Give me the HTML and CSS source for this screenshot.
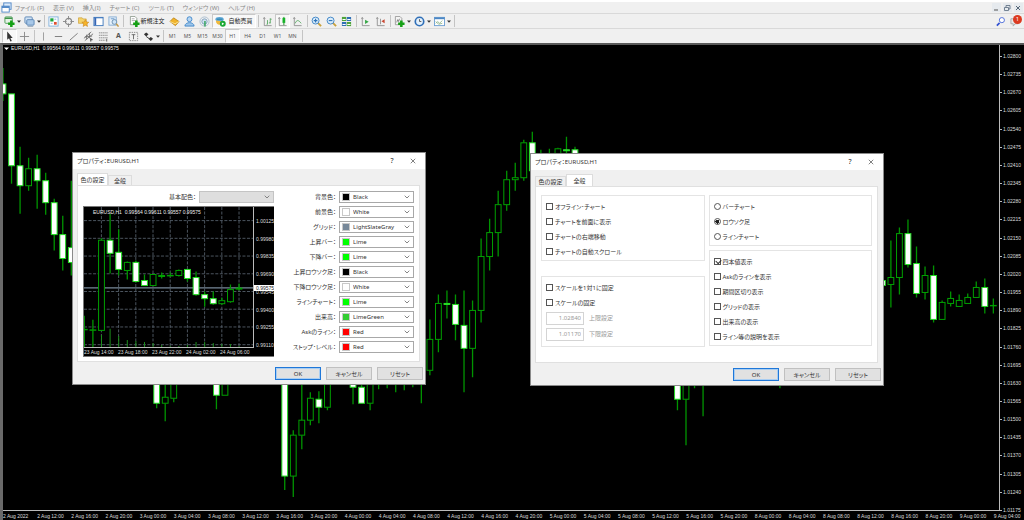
FILE: index.html
```html
<!DOCTYPE html>
<html lang="ja">
<head>
<meta charset="utf-8">
<title>EURUSD,H1</title>
<link rel="stylesheet" href="styles.css">
</head>
<body>
<svg class="defs" aria-hidden="true">
  <symbol id="caret" viewBox="0 0 4 3"><path d="M0 0.5h4L2 2.8z" fill="#333"/></symbol>
  <symbol id="chev" viewBox="0 0 6 4"><path d="M0.7 0.7L3 3L5.3 0.7" fill="none" stroke="#777" stroke-width="0.9"/></symbol>
  <symbol id="mdi" viewBox="0 0 12 12"><rect x="3" y="1" width="8" height="7" fill="#dcebfa" stroke="#4f86c6"/><rect x="1" y="4.5" width="8" height="6.5" fill="#fff" stroke="#4f86c6"/><path d="M1 5.5h8" stroke="#4f86c6" stroke-width="2"/></symbol>
  <symbol id="newchart" viewBox="0 0 12 12"><rect x="1" y="1" width="8" height="7" rx="1" fill="#e6f2e6" stroke="#4b9a55"/><path d="M1 2.5h8" stroke="#3d9448" stroke-width="1.6"/><path d="M8 5v7M4.5 8.5h7" stroke="#16a016" stroke-width="2.8"/></symbol>
  <symbol id="windows" viewBox="0 0 12 12"><rect x="1" y="1" width="8" height="7" rx="1" fill="#cfe2f5" stroke="#5b86b5"/><rect x="3" y="4" width="8" height="6" rx="1" fill="#a8c8e8" stroke="#5b86b5"/><path d="M4 11.5h6" stroke="#9ab"/></symbol>
  <symbol id="watch" viewBox="0 0 12 12"><rect x="1" y="1" width="10" height="10" fill="#fff" stroke="#7fb0dd"/><path d="M2.500 2.500h3.500v3.500H2.500z" fill="#1ea83c"/><path d="M6.500 6.500H9.500v3H6.500z" fill="#e05030"/><path d="M7 3.500h2M3 8h2" stroke="#7fb0dd"/></symbol>
  <symbol id="target" viewBox="0 0 12 12"><circle cx="6" cy="6" r="3.400" fill="none" stroke="#888" stroke-width="1.200"/><path d="M6 0v4M6 8v4M0 6h4M8 6h4" stroke="#888"/></symbol>
  <symbol id="folder" viewBox="0 0 12 12"><path d="M0.5 2h4l1 1.200H9V8H0.500z" fill="#f5d36a" stroke="#c89b30" stroke-width=".7"/><path d="M8 4l1.200 2.500 2.600.3-2 1.800.6 2.800L8 10l-2.400 1.400.6-2.800-2-1.800 2.600-.3z" fill="#f7b52a" stroke="#c5801a" stroke-width=".6"/></symbol>
  <symbol id="panel" viewBox="0 0 12 12"><rect x="1" y="1.500" width="10" height="9" fill="#fff" stroke="#3f78bd"/><path d="M2.500 2v8" stroke="#3565b5" stroke-width="2"/><path d="M1 2h10" stroke="#3f78bd"/></symbol>
  <symbol id="tester" viewBox="0 0 12 12"><rect x="1" y="1" width="8" height="9" fill="#e7f1fb" stroke="#84add4"/><circle cx="7" cy="6.500" r="2.600" fill="#cfe5f8" stroke="#6a8fb0"/><path d="M9 8.500l2.500 3" stroke="#c59a48" stroke-width="1.600"/><path d="M3 3h4" stroke="#6b9acb"/></symbol>
  <symbol id="order" viewBox="0 0 12 12"><path d="M1.500.5h5l2 2v7h-7z" fill="#fff" stroke="#7b8b7b" stroke-width=".8"/><path d="M3 3h3M3 5h4" stroke="#888" stroke-width=".7"/><path d="M8 5v7M4.500 8.500h7" stroke="#16a016" stroke-width="2.800"/></symbol>
  <symbol id="gold" viewBox="0 0 12 12"><path d="M1 6l4-4 6 4-4 4.500z" fill="#f0b42c" stroke="#b37b14" stroke-width=".8"/><path d="M1 6l5.500 2.500L11 6" fill="none" stroke="#fff0b0" stroke-width=".8"/></symbol>
  <symbol id="person" viewBox="0 0 12 12"><circle cx="6" cy="3.500" r="2.700" fill="#b9d8f4" stroke="#3f87c9"/><path d="M1 11c0-5 10-5 10 0z" fill="#9cc5ea" stroke="#3f87c9"/></symbol>
  <symbol id="signal" viewBox="0 0 12 12"><circle cx="6" cy="6" r="5" fill="none" stroke="#a9bdd0"/><circle cx="6" cy="6" r="2.900" fill="#cfe0ef" stroke="#7fa0bd"/><path d="M6.500 5.500v6" stroke="#2aa052" stroke-width="1.500"/></symbol>
  <symbol id="auto" viewBox="0 0 12 12"><ellipse cx="5" cy="3.500" rx="4.500" ry="2.500" fill="#5ca7d8"/><path d="M1 5c0 6 7 6 8 1z" fill="#f1b83c"/><path d="M2 3.500h6" stroke="#2d7f9f"/><circle cx="8.500" cy="8.500" r="3.200" fill="#18a832"/><path d="M7.500 7l2.500 1.500-2.500 1.500z" fill="#fff"/></symbol>
  <symbol id="bars" viewBox="0 0 12 12"><path d="M2.500 2v8.500h8M1.500 3l1-1.500 1 1.500" fill="none" stroke="#888" stroke-width=".9"/><path d="M6 4.500v4.500h-1M9 2.500v5.500M9 3.500h1.500M9 7.500h-1.500" fill="none" stroke="#5aa864"/></symbol>
  <symbol id="candles" viewBox="0 0 12 12"><path d="M2.500 2v8.500h8M1.500 3l1-1.500 1 1.500" fill="none" stroke="#888" stroke-width=".9"/><path d="M7.500 1v9" stroke="#178a22"/><path d="M6 2h3v5.500h-3z" fill="#18b32a"/></symbol>
  <symbol id="linechart" viewBox="0 0 12 12"><path d="M2.500 2v8.500h8M1.500 3l1-1.500 1 1.500" fill="none" stroke="#888" stroke-width=".9"/><path d="M3.500 8c1.500-4 3.500-4 6.500 0" fill="none" stroke="#5aa864"/></symbol>
  <symbol id="zoomin" viewBox="0 0 12 12"><path d="M7.500 7.500l3.500 3.500" stroke="#c9a13b" stroke-width="2"/><circle cx="5" cy="5" r="3.800" fill="#d9ecfb" stroke="#3c82c4"/><path d="M3 5h4M5 3v4" stroke="#2d74b8" stroke-width="1.200"/></symbol>
  <symbol id="zoomout" viewBox="0 0 12 12"><path d="M7.500 7.500l3.500 3.500" stroke="#c9a13b" stroke-width="2"/><circle cx="5" cy="5" r="3.800" fill="#d9ecfb" stroke="#3c82c4"/><path d="M3 5h4" stroke="#2d74b8" stroke-width="1.200"/></symbol>
  <symbol id="tiles" viewBox="0 0 12 12"><path d="M1 1h4.700v4.500H1z" fill="#4da33a"/><path d="M6.300 1H11v4.500H6.300zM1 6.500h4.700V11H1z" fill="#2f6fb5"/><path d="M6.300 6.500H11V11H6.300z" fill="#4da33a"/><path d="M1.600 3.800h3.500M6.900 3.800h3.500M1.600 9.200h3.500M6.900 9.200h3.500" stroke="#fff" stroke-width="1.200"/></symbol>
  <symbol id="scroll" viewBox="0 0 12 12"><path d="M2.500 2v8.500h8M1.500 3l1-1.500 1 1.500" fill="none" stroke="#888" stroke-width=".9"/><path d="M5.500 4l4 2.300-4 2.300z" fill="#35a645"/></symbol>
  <symbol id="shift" viewBox="0 0 12 12"><path d="M2.500 2v8.500h8M1.500 3l1-1.500 1 1.500M6 3v6" fill="none" stroke="#888" stroke-width=".9"/><path d="M10.500 3.500L7 5.800l3.500 2.200z" fill="#c8452f"/></symbol>
  <symbol id="indic" viewBox="0 0 12 12"><path d="M1.500.5h5l2 2v7h-7z" fill="#f4f4f4" stroke="#888" stroke-width=".8"/><path d="M3 7l1-3 1 2 1-3" fill="none" stroke="#555" stroke-width=".7"/><path d="M8 5v7M4.500 8.500h7" stroke="#16a016" stroke-width="2.800"/></symbol>
  <symbol id="clock" viewBox="0 0 12 12"><circle cx="6" cy="6" r="4.600" fill="#e3f0fb" stroke="#2f6fb8" stroke-width="1.800"/><path d="M6 3.500V6h2" fill="none" stroke="#555"/></symbol>
  <symbol id="template" viewBox="0 0 12 12"><rect x="0.500" y="1.500" width="11" height="9" fill="#fff" stroke="#6b9fd2"/><path d="M.5 2.500h11" stroke="#4b86c4" stroke-width="2"/><path d="M2 8l2-2 2 2 3-3M2 6l3 3 4-1" fill="none" stroke="#7ba877" stroke-width=".8"/></symbol>
  <symbol id="find" viewBox="0 0 12 12"><path d="M5 7.500L2 10.500" stroke="#2f4fd0" stroke-width="1.800"/><circle cx="7.500" cy="4.500" r="2.800" fill="#fff" stroke="#4a6bd8"/></symbol>
  <symbol id="chat" viewBox="0 0 12 12"><path d="M1 3h8v5.500H5.500l-2 2.500V8.500H1z" fill="#e8e8e8" stroke="#aaa"/></symbol>
  <symbol id="arrow" viewBox="0 0 12 12"><path d="M3.500.5v9L5.500 8l1.500 3.500 1.500-.7L7 7.500h2.500z" fill="#333"/></symbol>
  <symbol id="cross" viewBox="0 0 12 12"><path d="M6 1v10M1 6h10" stroke="#888"/></symbol>
  <symbol id="vline" viewBox="0 0 12 12"><path d="M6 1.500v9" stroke="#999"/></symbol>
  <symbol id="hline" viewBox="0 0 12 12"><path d="M2 6h8" stroke="#777"/></symbol>
  <symbol id="trend" viewBox="0 0 12 12"><path d="M2 10L10.500 2.500" stroke="#777"/></symbol>
  <symbol id="channel" viewBox="0 0 12 12"><path d="M1 8L9 1M2 10.500L11 3M4 4v5M7 2v6M2 6.500l8-1" stroke="#666" stroke-width=".9"/><path d="M8.500 7.500v4M10.500 9.500h-2" stroke="#333"/></symbol>
  <symbol id="fib" viewBox="0 0 12 12"><path d="M1 2h10M1 4.700h10M1 7.400h10M1 10.100h7" stroke="#888" stroke-dasharray="1.500 .5"/><path d="M9.500 8.500v3" stroke="#555"/></symbol>
  <symbol id="textbox" viewBox="0 0 12 12"><rect x="1.500" y="1.500" width="9" height="9" fill="none" stroke="#888" stroke-dasharray="1.500 1"/><path d="M4 4h4M6 4v5" stroke="#666"/></symbol>
  <symbol id="shapes" viewBox="0 0 12 12"><path d="M1 3.500l2.500-2L6 3.500 3.500 6z" fill="#333"/><path d="M3.500 6l3.500 2.500" stroke="#333"/><path d="M6 8.500l2.500-2L11 8.500 8.500 11z" fill="#333"/></symbol>
</svg>

<header class="top">
  <nav class="menu">
    <svg class="icon"><use href="#mdi"/></svg>
    <button>ファイル (F)</button><button>表示 (V)</button><button>挿入(I)</button><button>チャート (C)</button><button>ツール (T)</button><button>ウィンドウ (W)</button><button>ヘルプ (H)</button>
    <div class="winbtns">
      <button aria-label="最小化"><svg viewBox="0 0 8 8"><path d="M2 6h4" stroke="#555"/></svg></button>
      <button aria-label="元に戻す"><svg viewBox="0 0 8 8"><path d="M3 3V1.500h4V5H5.500M1.500 3.500h4v3h-4z" fill="none" stroke="#678" stroke-width=".9"/></svg></button>
      <button aria-label="閉じる"><svg viewBox="0 0 8 8"><path d="M2 2l4 4M6 2L2 6" stroke="#567"/></svg></button>
    </div>
  </nav>
  <div class="bar">
    <button class="tool drop" aria-label="新規チャート"><svg class="icon"><use href="#newchart"/></svg><svg class="caret"><use href="#caret"/></svg></button>
    <button class="tool drop" aria-label="チャート組表示"><svg class="icon"><use href="#windows"/></svg><svg class="caret"><use href="#caret"/></svg></button>
    <i class="sep"></i>
    <button class="tool" aria-label="気配値"><svg class="icon"><use href="#watch"/></svg></button>
    <button class="tool" aria-label="データウィンドウ"><svg class="icon"><use href="#target"/></svg></button>
    <button class="tool" aria-label="ナビゲーター"><svg class="icon"><use href="#folder"/></svg></button>
    <button class="tool" aria-label="ターミナル"><svg class="icon"><use href="#panel"/></svg></button>
    <button class="tool" aria-label="テスター"><svg class="icon"><use href="#tester"/></svg></button>
    <i class="sep wide"></i>
    <button class="tool order"><svg class="icon"><use href="#order"/></svg>新規注文</button>
    <button class="tool" aria-label="エディター"><svg class="icon"><use href="#gold"/></svg></button>
    <button class="tool" aria-label="コミュニティ"><svg class="icon"><use href="#person"/></svg></button>
    <button class="tool" aria-label="シグナル"><svg class="icon"><use href="#signal"/></svg></button>
    <button class="tool auto on"><svg class="icon"><use href="#auto"/></svg>自動売買</button>
    <i class="sep"></i>
    <button class="tool" aria-label="バー"><svg class="icon"><use href="#bars"/></svg></button>
    <button class="tool on" aria-label="ローソク"><svg class="icon"><use href="#candles"/></svg></button>
    <button class="tool" aria-label="ライン"><svg class="icon"><use href="#linechart"/></svg></button>
    <i class="sep"></i>
    <button class="tool" aria-label="拡大"><svg class="icon"><use href="#zoomin"/></svg></button>
    <button class="tool" aria-label="縮小"><svg class="icon"><use href="#zoomout"/></svg></button>
    <button class="tool" aria-label="整列"><svg class="icon"><use href="#tiles"/></svg></button>
    <i class="sep"></i>
    <button class="tool" aria-label="自動スクロール"><svg class="icon"><use href="#scroll"/></svg></button>
    <button class="tool" aria-label="右端移動"><svg class="icon"><use href="#shift"/></svg></button>
    <i class="sep"></i>
    <button class="tool drop" aria-label="インディケータ"><svg class="icon"><use href="#indic"/></svg><svg class="caret"><use href="#caret"/></svg></button>
    <button class="tool drop" aria-label="時間足"><svg class="icon"><use href="#clock"/></svg><svg class="caret"><use href="#caret"/></svg></button>
    <button class="tool drop" aria-label="定型チャート"><svg class="icon"><use href="#template"/></svg><svg class="caret"><use href="#caret"/></svg></button>
    <i class="sep"></i>
    <div class="right">
      <button class="tool" aria-label="検索"><svg class="icon"><use href="#find"/></svg></button>
      <button class="tool chat" aria-label="通知"><svg class="icon"><use href="#chat"/></svg><span class="badge">1</span></button>
    </div>
  </div>
  <div class="bar">
    <button class="tool on" aria-label="カーソル"><svg class="icon"><use href="#arrow"/></svg></button>
    <button class="tool" aria-label="クロスヘア"><svg class="icon"><use href="#cross"/></svg></button>
    <i class="sep"></i>
    <button class="tool" aria-label="垂直線"><svg class="icon"><use href="#vline"/></svg></button>
    <button class="tool" aria-label="水平線"><svg class="icon"><use href="#hline"/></svg></button>
    <button class="tool" aria-label="トレンドライン"><svg class="icon"><use href="#trend"/></svg></button>
    <button class="tool" aria-label="チャネル"><svg class="icon"><use href="#channel"/></svg></button>
    <button class="tool" aria-label="フィボナッチ"><svg class="icon"><use href="#fib"/></svg></button>
    <button class="tool letter">A</button>
    <button class="tool" aria-label="ラベル"><svg class="icon"><use href="#textbox"/></svg></button>
    <button class="tool drop" aria-label="矢印"><svg class="icon"><use href="#shapes"/></svg><svg class="caret"><use href="#caret"/></svg></button>
    <i class="sep"></i>
    <button class="tool tf">M1</button><button class="tool tf">M5</button><button class="tool tf">M15</button><button class="tool tf">M30</button><button class="tool tf on">H1</button><button class="tool tf">H4</button><button class="tool tf">D1</button><button class="tool tf">W1</button><button class="tool tf">MN</button>
    <i class="sep"></i>
  </div>
</header>

<main class="chart">
  <div class="plot">
    <svg id="main-plot" class="fill" viewBox="3 44 997 466" preserveAspectRatio="none"></svg>
    <div class="ticker"><svg class="caret"><path d="M0 .5h5L2.500 3z" fill="#fff"/></svg><span>EURUSD,H1&nbsp; 0.99564 0.99611 0.99557 0.99575</span></div>
  </div>
  <div class="prices" id="prices"></div>
  <div class="times" id="times"></div>

  <section class="dialog colors" role="dialog" aria-label="プロパティ">
    <div class="title"><span>プロパティ：EURUSD,H1</span><button>?</button><button aria-label="閉じる"><svg viewBox="0 0 8 8"><path d="M1 1l6 6M7 1L1 7" stroke="#444" stroke-width=".9"/></svg></button></div>
    <div class="tabs"><button class="tab active">色の設定</button><button class="tab">全般</button></div>
    <div class="page two">
      <div class="preview">
        <div class="field"><label for="scheme">基本配色：</label><div class="combo off"><select id="scheme" disabled><option></option></select><svg class="chev"><use href="#chev"/></svg></div></div>
        <div class="mini">
          <div class="plot">
            <svg id="mini-plot" class="fill" viewBox="85 208 168 139" preserveAspectRatio="none"></svg>
            <div class="ticker"><span>EURUSD,H1&nbsp; 0.99564 0.99611 0.99557 0.99575</span></div>
          </div>
          <div class="mprices"><span>1.00125</span><span>0.99980</span><span>0.99835</span><span>0.99690</span><span>0.99545</span><span>0.99400</span><span>0.99255</span><span>0.99110</span><b class="now">0.99575</b></div>
          <div class="mtimes"><span>23 Aug 14:00</span><span>23 Aug 18:00</span><span>23 Aug 22:00</span><span>24 Aug 02:00</span><span>24 Aug 06:00</span></div>
        </div>
      </div>
      <div class="fields" id="fields"></div>
    </div>
    <div class="actions"><button class="btn default">OK</button><button class="btn">キャンセル</button><button class="btn">リセット</button></div>
  </section>

  <section class="dialog general" role="dialog" aria-label="プロパティ">
    <div class="title"><span>プロパティ：EURUSD,H1</span><button>?</button><button aria-label="閉じる"><svg viewBox="0 0 8 8"><path d="M1 1l6 6M7 1L1 7" stroke="#444" stroke-width=".9"/></svg></button></div>
    <div class="tabs"><button class="tab">色の設定</button><button class="tab active">全般</button></div>
    <div class="page groups">
      <div class="col apart">
        <div class="group">
          <label><input type="checkbox">オフライン･チャート</label>
          <label><input type="checkbox">チャートを前面に表示</label>
          <label><input type="checkbox">チャートの右端移動</label>
          <label><input type="checkbox">チャートの自動スクロール</label>
        </div>
        <div class="group scale">
          <label><input type="checkbox">スケールを1対1に固定</label>
          <label><input type="checkbox">スケールの固定</label>
          <label class="num"><input type="text" value="1.02840" disabled>上限設定</label>
          <label class="num"><input type="text" value="1.01170" disabled>下限設定</label>
        </div>
      </div>
      <div class="col">
        <div class="group">
          <label><input type="radio" name="kind">バーチャート</label>
          <label><input type="radio" name="kind" checked>ロウソク足</label>
          <label><input type="radio" name="kind">ラインチャート</label>
        </div>
        <div class="group">
          <label><input type="checkbox" checked>四本値表示</label>
          <label><input type="checkbox">Askのラインを表示</label>
          <label><input type="checkbox">期間区切り表示</label>
          <label><input type="checkbox">グリッドの表示</label>
          <label><input type="checkbox">出来高の表示</label>
          <label><input type="checkbox">ライン等の説明を表示</label>
        </div>
      </div>
    </div>
    <div class="actions"><button class="btn default">OK</button><button class="btn">キャンセル</button><button class="btn">リセット</button></div>
  </section>
</main>
<script src="chart.js"></script>
</body>
</html>
```
FILE: styles.css
```css
* { box-sizing: border-box; }
body {
  margin: 0;
  min-height: 100vh;
  display: flex;
  flex-direction: column;
  background: #f0f0f0;
  color: #333;
  font: 6px/8px "Noto Sans", "Noto Sans CJK JP", sans-serif;
}
button, input, select { font: inherit; color: inherit; margin: 0; padding: 0; border: 0; background: none; border-radius: 0; }
svg { display: block; }
.defs { position: absolute; width: 0; height: 0; }
.icon { width: 11px; height: 11px; flex: none; }
.caret { width: 5px; height: 3px; flex: none; }
.tool .caret { width: 4px; }
.fill { width: 100%; height: 100%; }

/* Menu and toolbars */
.top { border-top: 2px solid #fff; height: 43px; }
.menu { display: flex; align-items: center; gap: 9px; height: 11px; padding-left: 1px; color: #888; font-feature-settings: "palt"; }
.menu .icon { margin-right: -6px; }
.winbtns { display: flex; margin-left: auto; gap: 2px; padding-right: 1px; }
.winbtns button { width: 9px; height: 9px; background: #e6eaee; }
.winbtns svg { width: 8px; height: 8px; }
.bar { display: flex; align-items: center; height: 15px; padding-left: 2px; border-top: 1px solid #d9d9d9; }
.tool { display: flex; align-items: center; justify-content: center; width: 15px; height: 14px; color: #222; border: 1px solid transparent; }
.tool.on { background: #f8f8f8; border-color: #c8c8c8 #fff #fff #c8c8c8; }
.tool.drop { width: 20px; gap: 2px; }
.tool.order { width: 40px; white-space: nowrap; }
.tool.auto { width: 44px; gap: 2px; white-space: nowrap; }
.tool.letter { color: #555; font-size: 7px; font-weight: 700; }
.tool.tf { font-size: 5px; color: #555; }
.sep { width: 4px; height: 12px; flex: none; background: linear-gradient(90deg, transparent 2px, #c4c4c4 2px, #c4c4c4 3px, transparent 3px); }
.sep.wide { width: 6px; }
.right { margin-left: auto; display: flex; padding-right: 1px; }
.chat { position: relative; }
.badge { position: absolute; top: 0; right: 0; width: 9px; height: 9px; border-radius: 50%; background: #dc3a20; color: #fff; line-height: 9px; text-align: center; }

/* Chart window */
.chart {
  flex: 1;
  position: relative;
  display: grid;
  grid-template: minmax(0, 1fr) 9px / minmax(0, 1fr) 24px;
  border-top: 2px solid #5a5a5a;
  border-left: 3px solid #6a6a6a;
  background: #000;
  color: #ddd;
  overflow: hidden;
  font: 5px/6px "Liberation Sans", Arial, sans-serif;
}
.plot { position: relative; min-width: 0; min-height: 0; border-right: 1px solid #bbb; border-bottom: 1px solid #bbb; }
.plot .fill { position: absolute; inset: 0; }
.ticker { position: absolute; left: 1px; top: 0; display: flex; align-items: center; gap: 2px; color: #eee; white-space: nowrap; }
.prices { display: flex; flex-direction: column; justify-content: space-between; padding: 8px 0 0; margin-bottom: -2px; }
.prices span::before { content: ""; display: inline-block; width: 2px; height: 1px; margin-right: 1px; vertical-align: 1px; background: #bbb; }
.times { grid-column: 1 / -1; display: grid; grid-template-columns: repeat(30, minmax(0, 1fr)); margin-right: -4px; padding-top: 2px; white-space: nowrap; }

/* Dialogs */
.dialog {
  position: absolute;
  width: 354px;
  background: #f0f0f0;
  color: #333;
  border: 1px solid #8a8a8a;
  font: 6px/8px "Noto Sans", "Noto Sans CJK JP", sans-serif;
  font-feature-settings: "palt";
}
.dialog.colors { left: 69px; top: 107px; }
.dialog.general { left: 527px; top: 108px; }
.title { display: flex; align-items: center; height: 16px; padding: 0 3px 0 4px; background: #fff; }
.title span { flex: 1; }
.title button { width: 24px; height: 14px; display: grid; place-items: center; font-size: 7px; color: #222; }
.title button:last-child { width: 18px; }
.title svg { width: 6px; height: 6px; }
.tabs { display: flex; align-items: flex-end; height: 16px; padding-left: 4px; }
.tab { width: 24px; height: 10px; border: 1px solid #dcdcdc; border-bottom: 0; }
.tab:first-child { width: 31px; }
.tab.active { height: 12px; background: #fff; }
.general .tab.active { width: 27px; }
.page { height: 177px; margin: 0 5px 0 4px; background: #fff; border: 1px solid #e0e0e0; }
.actions { display: flex; justify-content: flex-end; gap: 5px; padding: 5px 2px 4px; }
.btn { width: 46px; height: 13px; background: #e1e1e1; border: 1px solid #c0c0c0; }
.btn.default { border: 1px solid #1f77d8; outline: 1px solid #a8cdf2; outline-offset: -2px; }

.two { display: grid; grid-template-columns: 191px 1fr; gap: 4px; padding: 5px 5px 0 5px; }
.field { display: flex; align-items: center; justify-content: flex-end; gap: 3px; height: 12px; }
.combo { display: flex; align-items: center; width: 75px; height: 12px; padding: 0 3px 0 2px; border: 1px solid #a8a8a8; background: #fff; }
.combo.off { background: #dedede; border-color: #c4c4c4; }
.combo select { flex: 1; appearance: none; height: 10px; outline: 0; }
.swatch { width: 8px; height: 8px; margin-right: 3px; border: 1px solid #c8c8c8; }
.chev { width: 6px; height: 4px; }
.fields { display: flex; flex-direction: column; gap: 3px; }

.mini {
  display: grid;
  grid-template: 141px 8px / 170px 21px;
  margin-top: 3px;
  background: #000;
  color: #ddd;
  border: 1px solid #777;
  border-right: 0;
  font: 5px/6px "Liberation Sans", Arial, sans-serif;
  font-feature-settings: normal;
  overflow: hidden;
}
.mini .ticker { left: 9px; top: 2px; }
.mprices { position: relative; display: flex; flex-direction: column; justify-content: space-between; padding-top: 11px; }
.mprices span { padding-left: 2px; }
.now { position: absolute; left: 0; right: 0; top: 78px; padding-left: 2px; background: #fff; color: #222; font-weight: 400; }
.mtimes { grid-column: 1 / -1; display: grid; grid-template-columns: repeat(5, 34px); padding-top: 1px; white-space: nowrap; }

.groups { display: grid; grid-template-columns: 1fr 1fr; gap: 4px; padding: 8px 5px 15px 5px; }
.col { display: flex; flex-direction: column; gap: 4px; }
.col.apart { justify-content: space-between; }
.group { border: 1px solid #e4e4e4; padding: 3px 4px 1px; }
.group label { display: flex; align-items: center; gap: 2px; height: 15px; }
.group.scale { padding-bottom: 4px; }
.group input[type="checkbox"], .group input[type="radio"] { appearance: none; position: relative; width: 7px; height: 7px; border: 1px solid #555; background: #fff; }
.group input[type="radio"] { border-radius: 50%; }
.group input[type="radio"]:checked { background: radial-gradient(circle, #222 0 1px, #222 2px, #fff 2px); }
.group input[type="checkbox"]:checked::after { content: ""; position: absolute; left: 1px; top: 0; width: 4px; height: 3px; border: solid #333; border-width: 0 0 1px 1px; transform: rotate(-45deg); }
.group .num { gap: 5px; height: 16px; color: #999; }
.group .num input { width: 38px; height: 13px; padding: 0 2px; border: 1px solid #d4d4d4; text-align: right; }
```
FILE: chart.js
```js
const NS = "http://www.w3.org/2000/svg";

function shape(parent, name, attrs) {
  const node = document.createElementNS(NS, name);
  for (const key in attrs) node.setAttribute(key, attrs[key]);
  parent.appendChild(node);
}

// Row: index, high, body top, body bottom, low, 1 = falling (filled) bar.
function drawCandles(svg, x0, step, rows) {
  for (const [i, high, top, bottom, low, down] of rows) {
    const x = x0 + step * i;
    shape(svg, "path", { d: `M${x} ${high}V${top}M${x} ${bottom}V${low}`, stroke: "#009400", "stroke-width": 1.3 });
    shape(svg, "rect", {
      x: x - 2.9, y: top, width: 5.8, height: Math.max(bottom - top, 0.4),
      fill: down ? "#fff" : "#000", stroke: down ? "#22dd22" : "#00a000", "stroke-width": 1
    });
  }
}

drawCandles(document.getElementById("main-plot"), 3, 8.546, [
  [0, 67, 83, 93, 100, 1], [1, 93, 93, 165, 183, 1], [2, 146, 165, 185, 213, 1], [3, 157, 168, 185, 190, 0],
  [4, 154, 168, 180, 208, 1], [5, 172, 180, 202, 214, 1], [6, 198, 202, 234, 250, 1], [7, 215, 234, 258, 270, 1],
  [8, 180, 247, 262, 275, 1],
  [18, 370, 380, 403, 408, 1], [19, 380, 397, 403, 421, 0], [20, 370, 380, 398, 402, 0],
  [25, 370, 380, 395, 409, 1], [26, 370, 380, 395, 395, 0],
  [33, 370, 380, 476, 490, 1], [34, 430, 435, 476, 497, 0], [35, 380, 420, 435, 449, 0], [36, 392, 398, 420, 425, 0],
  [37, 391, 399, 407, 423, 1], [38, 370, 380, 407, 410, 0], [41, 370, 380, 387, 404, 1], [42, 380, 387, 403, 403, 1],
  [43, 370, 380, 403, 410, 0], [44, 370, 375, 380, 389, 0], [45, 370, 375, 380, 388, 0], [46, 370, 375, 380, 392, 0],
  [47, 370, 375, 380, 390, 0], [48, 370, 375, 380, 387, 0], [49, 370, 375, 380, 403, 0],
  [50, 319, 339, 370, 375, 0], [51, 294, 303, 339, 352, 0], [52, 290, 303, 304, 318, 1], [53, 294, 304, 324, 340, 1],
  [54, 290, 325, 348, 392, 1], [55, 300, 310, 348, 377, 0], [56, 238, 256, 310, 322, 0], [57, 218, 232, 256, 270, 0],
  [58, 190, 204, 232, 256, 0], [59, 170, 179, 204, 210, 0], [60, 162, 177, 179, 190, 0], [61, 139, 142, 177, 180, 0],
  [62, 131, 142, 170, 175, 1], [63, 149, 156, 165, 170, 0], [64, 148, 156, 165, 170, 0], [65, 147, 148, 165, 170, 0],
  [66, 136, 149, 150, 155, 1], [67, 146, 149, 165, 170, 1],
  [79, 370, 380, 399, 410, 1], [80, 370, 380, 399, 445, 0], [81, 370, 375, 380, 388, 0], [82, 370, 375, 380, 416, 0],
  [91, 370, 375, 380, 388, 0],
  [103, 270, 280, 285, 290, 1], [104, 240, 277, 284, 307, 0], [105, 227, 233, 277, 294, 0], [106, 219, 233, 264, 267, 1],
  [107, 246, 263, 293, 297, 1], [108, 266, 275, 292, 299, 0], [109, 265, 275, 319, 322, 1], [110, 300, 302, 319, 319, 0],
  [111, 291, 298, 303, 306, 0], [112, 294, 300, 306, 306, 0], [113, 293, 297, 303, 303, 0], [114, 281, 287, 297, 297, 0],
  [115, 278, 287, 306, 313, 1], [116, 298, 305, 305, 313, 0]
]);

const mini = document.getElementById("mini-plot");
for (let k = 0; k < 9; k++) {
  const x = 102.3 + 17.1 * k;
  shape(mini, "path", { d: `M${x} 208V347`, stroke: "#5d6975", "stroke-width": 0.8, "stroke-dasharray": "3 1.5" });
}
for (let k = 0; k < 8; k++) {
  const y = 221.5 + 17.6 * k;
  shape(mini, "path", { d: `M85 ${y}H253`, stroke: "#5d6975", "stroke-width": 0.8, "stroke-dasharray": "3 1.5" });
}
shape(mini, "path", { d: "M85 288.3H253", stroke: "#778899", "stroke-width": 1 });
[0, 0, 12, 18, 11, 7, 6, 5, 4, 2, 1, 1, 2, 5, 5, 4, 3, 3, 1].forEach((h, i) => {
  const x = 85.3 + 8.546 * i;
  shape(mini, "path", { d: `M${x} 347v${-h}`, stroke: "#1c8c1c", "stroke-width": 1 });
});
drawCandles(mini, 85.3, 8.546, [
  [0, 316, 329.5, 329.5, 347, 0], [1, 320, 330, 330, 347, 0], [2, 239, 241, 330.5, 331, 0], [3, 215, 241, 254, 274, 1],
  [4, 230, 253, 270, 276, 1], [5, 262, 263, 271, 280, 0], [6, 261, 263, 282, 283, 1], [7, 275, 281, 286, 286, 1],
  [8, 275, 275, 286, 286, 0], [9, 273, 276, 277, 279, 0], [10, 273, 276, 276, 277, 0], [11, 270, 271, 276, 277, 0],
  [12, 270, 270, 279, 282, 1], [13, 272, 278, 295, 296, 1], [14, 292, 295, 299, 307, 1], [15, 292, 299, 304, 305, 1],
  [16, 298, 301, 304, 305, 0], [17, 285, 290, 302, 303, 0], [18, 284, 288.5, 289.5, 291, 0]
]);

const prices = document.getElementById("prices");
for (let k = 0; k < 26; k++) {
  const span = document.createElement("span");
  span.textContent = (1.028 - 0.00065 * k).toFixed(5);
  prices.appendChild(span);
}

const times = document.getElementById("times");
const days = [2, 3, 4, 5, 8, 9];
let day = 0, hour = 8;
for (let k = 0; k < 30; k++) {
  const span = document.createElement("span");
  span.textContent = k === 0 ? "2 Aug 2022" : `${days[day]} Aug ${String(hour).padStart(2, "0")}:00`;
  times.appendChild(span);
  hour += 4;
  if (hour === 24) { hour = 0; day++; }
}

const fields = document.getElementById("fields");
[
  ["背景色", "Black", "#000"], ["前景色", "White", "#fff"], ["グリッド", "LightSlateGray", "#778899"],
  ["上昇バー", "Lime", "#0f0"], ["下降バー", "Lime", "#0f0"], ["上昇ロウソク足", "Black", "#000"],
  ["下降ロウソク足", "White", "#fff"], ["ラインチャート", "Lime", "#0f0"], ["出来高", "LimeGreen", "#32cd32"],
  ["Askのライン", "Red", "#f00"], ["ストップ･レベル", "Red", "#f00"]
].forEach(([label, name, color], i) => {
  const row = document.createElement("div");
  row.className = "field";
  row.innerHTML = `<label for="color${i}">${label}：</label><div class="combo"><span class="swatch" style="background:${color}"></span><select id="color${i}"><option>${name}</option></select><svg class="chev"><use href="#chev"/></svg></div>`;
  fields.appendChild(row);
});
```
